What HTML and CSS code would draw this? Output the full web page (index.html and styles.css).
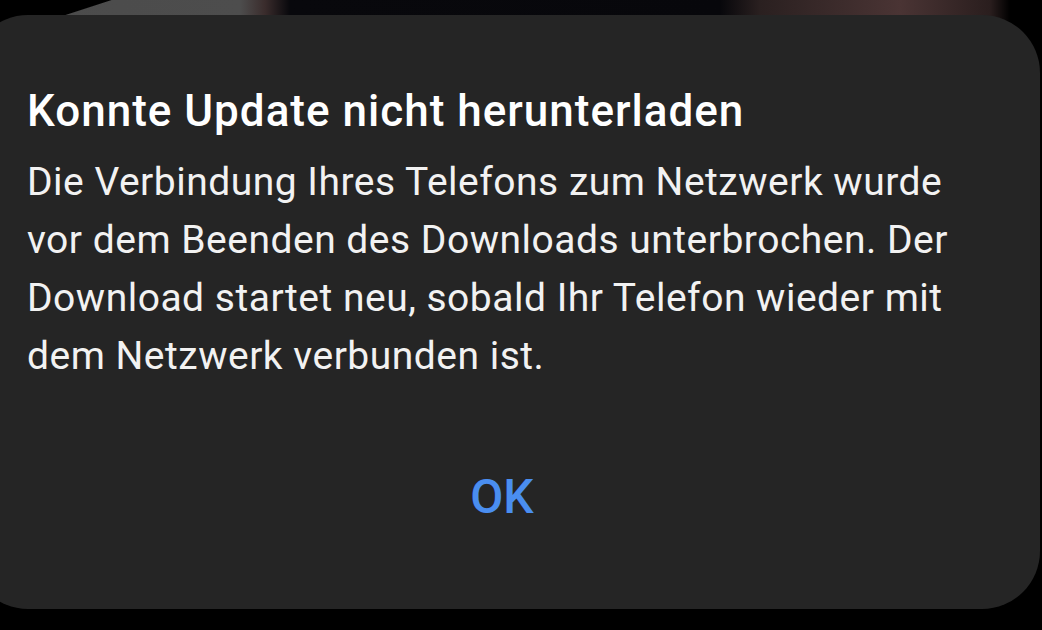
FILE: index.html
```html
<!DOCTYPE html>
<html lang="de">
<head>
<meta charset="utf-8">
<title>Konnte Update nicht herunterladen</title>
<link rel="stylesheet" href="styles.css">
</head>
<body>
<div class="wallpaper"></div>
<div class="dialog">
  <h1 class="title">Konnte Update nicht herunterladen</h1>
  <p class="message">Die Verbindung Ihres Telefons zum Netzwerk wurde vor dem Beenden des Downloads unterbrochen. Der Download startet neu, sobald Ihr Telefon wieder mit dem Netzwerk verbunden ist.</p>
  <div class="actions"><button class="ok">OK</button></div>
</div>
</body>
</html>
```
FILE: styles.css
```css
html, body {
  margin: 0;
  padding: 0;
  background: #000;
  width: 1042px;
  height: 630px;
  overflow: hidden;
  font-family: Roboto, "Noto Sans", sans-serif;
}
body {
  position: relative;
}
.wallpaper {
  position: absolute;
  left: 0;
  top: 0;
  width: 1042px;
  height: 40px;
  background:
    linear-gradient(162deg, #000 0, #000 34px, rgba(0,0,0,0) 35px),
    linear-gradient(to right, #4b4b4b 0, #4d4d4d 240px, #3a2c2c 265px, #08080c 290px, #07070b 720px, #2a2020 760px, #4a3434 900px, #2a1e1e 990px, #000 1010px);
}
.dialog {
  position: relative;
  margin: 15px 0 0 -30px;
  width: 1070px;
  height: 594px;
  box-sizing: border-box;
  background: #252525;
  border-radius: 58px;
  padding: 70px 63px 0 57px;
  display: flex;
  flex-direction: column;
}
.title {
  margin: 0;
  color: #fff;
  font-weight: 500;
  font-size: 44px;
  line-height: 52px;
  letter-spacing: 1px;
}
.message {
  margin: 16px 0 0 0;
  color: #f2f2f2;
  font-weight: 400;
  font-size: 39px;
  line-height: 58px;
  letter-spacing: 0.5px;
}
.actions {
  display: flex;
  justify-content: center;
  margin-top: 87px;
}
.ok {
  background: none;
  border: 0;
  padding: 0;
  color: #4a8ef0;
  font-family: Roboto, sans-serif;
  font-weight: 500;
  font-size: 48px;
  line-height: 50px;
}
```
